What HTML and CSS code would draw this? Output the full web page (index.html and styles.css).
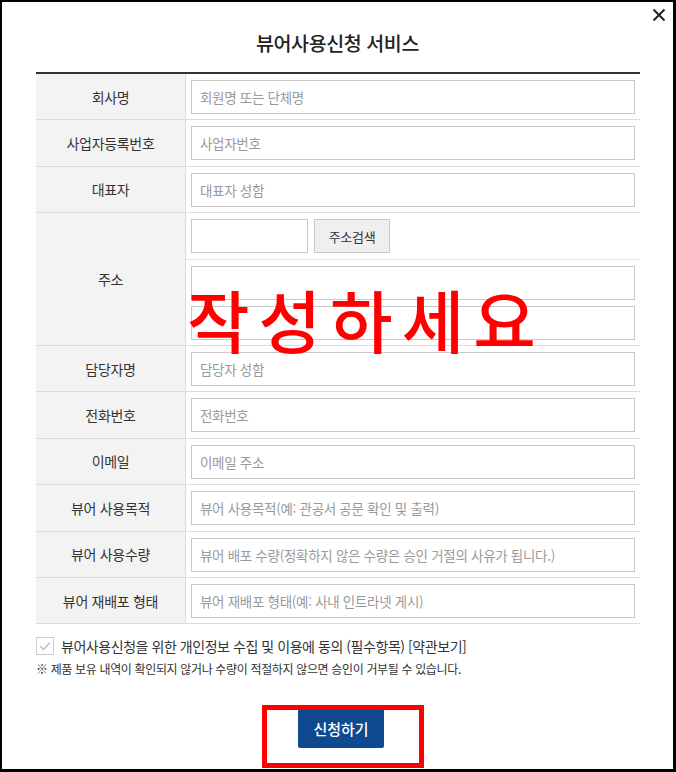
FILE: index.html
```html
<!DOCTYPE html>
<html lang="ko">
<head>
<meta charset="utf-8">
<title>뷰어사용신청 서비스</title>
<link rel="stylesheet" href="styles.css">
</head>
<body>
<div class="frame">
  <button class="close" aria-label="닫기">
    <svg width="14" height="14" viewBox="0 0 14 14"><path d="M1.5 1.5 L12.5 12.5 M12.5 1.5 L1.5 12.5" stroke="#222" stroke-width="2" fill="none"/></svg>
  </button>
  <h1 class="title">뷰어사용신청 서비스</h1>
  <table class="form">
    <tr><th>회사명</th><td><input class="field" placeholder="회원명 또는 단체명"></td></tr>
    <tr><th>사업자등록번호</th><td><input class="field" placeholder="사업자번호"></td></tr>
    <tr><th>대표자</th><td><input class="field" placeholder="대표자 성함"></td></tr>
    <tr><th rowspan="2">주소</th><td><div class="zip"><input class="field zip-input"><button class="zip-btn">주소검색</button></div></td></tr>
    <tr><td class="addr"><input class="field"><input class="field"></td></tr>
    <tr><th>담당자명</th><td><input class="field" placeholder="담당자 성함"></td></tr>
    <tr><th>전화번호</th><td><input class="field" placeholder="전화번호"></td></tr>
    <tr><th>이메일</th><td><input class="field" placeholder="이메일 주소"></td></tr>
    <tr><th>뷰어 사용목적</th><td><input class="field" placeholder="뷰어 사용목적(예: 관공서 공문 확인 및 출력)"></td></tr>
    <tr><th>뷰어 사용수량</th><td><input class="field" placeholder="뷰어 배포 수량(정확하지 않은 수량은 승인 거절의 사유가 됩니다.)"></td></tr>
    <tr><th>뷰어 재배포 형태</th><td><input class="field" placeholder="뷰어 재배포 형태(예: 사내 인트라넷 게시)"></td></tr>
  </table>
  <label class="agree">
    <span class="check"><svg width="12" height="10" viewBox="0 0 12 10"><path d="M1 5 L4.5 8.5 L11 1.5" stroke="#c4c4c4" stroke-width="1.6" fill="none"/></svg></span>
    <span>뷰어사용신청을 위한 개인정보 수집 및 이용에 동의 (필수항목) [약관보기]</span>
  </label>
  <p class="note">※ 제품 보유 내역이 확인되지 않거나 수량이 적절하지 않으면 승인이 거부될 수 있습니다.</p>
  <div class="actions"><button class="submit">신청하기</button></div>
  <div class="mark-text">작성하세요</div>
  <div class="mark-box"></div>
</div>
</body>
</html>
```
FILE: styles.css
```css
html, body { margin: 0; padding: 0; background: #fff; }
.frame {
  position: relative;
  width: 676px;
  height: 772px;
  box-sizing: border-box;
  border-style: solid;
  border-color: #000;
  border-width: 2px 3px 3px 2px;
  background: #fff;
  font-family: "Noto Sans CJK KR", "Noto Sans", sans-serif;
  color: #333;
  overflow: hidden;
}
.close {
  position: absolute;
  top: 6px;
  right: 7px;
  padding: 0;
  border: 0;
  background: none;
  line-height: 0;
}
.title {
  margin: 0;
  padding-top: 28px;
  height: 42px;
  text-align: center;
  font-size: 19.5px;
  line-height: 26px;
  font-weight: 500;
  color: #222;
  letter-spacing: -0.4px;
}
.form {
  margin-left: 34px;
  width: 604px;
  border-collapse: collapse;
  border-top: 2px solid #333;
}
.form th {
  width: 149px;
  background: #f3f3f3;
  border-right: 1px solid #dcdcdc;
  border-bottom: 1px solid #dcdcdc;
  font-size: 14px;
  font-weight: 400;
  color: #333;
  padding: 0;
  letter-spacing: -0.3px;
}
.form td {
  padding: 6px 5px 5.4px 5px;
  border-bottom: 1px solid #dcdcdc;
}
.form tr:nth-child(4) td { border-bottom-color: #e6e6e6; }
.field {
  display: block;
  box-sizing: border-box;
  width: 100%;
  height: 34px;
  border: 1px solid #c8c8c8;
  padding: 0 8px;
  font-family: inherit;
  font-size: 13.5px;
  color: #333;
  background: #fff;
  letter-spacing: -0.3px;
}
.field::placeholder { color: #9a9a9a; }
.zip { display: flex; gap: 6px; }
.zip .zip-input { width: 117px; }
.zip-btn {
  width: 76px;
  height: 34px;
  border: 1px solid #c8c8c8;
  background: #efefef;
  font-family: inherit;
  font-size: 13px;
  color: #333;
  padding: 0;
  letter-spacing: -0.3px;
}
.addr .field + .field { margin-top: 6px; }
.agree {
  display: flex;
  align-items: center;
  gap: 7px;
  margin: 13px 0 0 34px;
  font-size: 14px;
  color: #333;
  letter-spacing: -0.45px;
  height: 18px;
}
.check {
  width: 16px;
  height: 16px;
  border: 1px solid #ccc;
  display: flex;
  align-items: center;
  justify-content: center;
  background: #fff;
}
.note {
  margin: 6px 0 0 34px;
  font-size: 12px;
  color: #333;
  letter-spacing: -0.35px;
  line-height: 16px;
}
.actions { margin-top: 32px; padding-left: 296px; }
.submit {
  width: 86px;
  height: 39px;
  border: 0;
  border-radius: 2px;
  background: #0f4a90;
  color: #fff;
  font-family: inherit;
  font-size: 15px;
  font-weight: 500;
  padding: 0;
}
.mark-text {
  position: absolute;
  left: 185px;
  top: 277px;
  font-size: 68px;
  line-height: 80px;
  color: #ff0000;
  letter-spacing: 9px;
  font-weight: 500;
  white-space: nowrap;
}
.mark-box {
  position: absolute;
  left: 260px;
  top: 703px;
  width: 152px;
  height: 53px;
  border: 5px solid #ff0000;
}
```
